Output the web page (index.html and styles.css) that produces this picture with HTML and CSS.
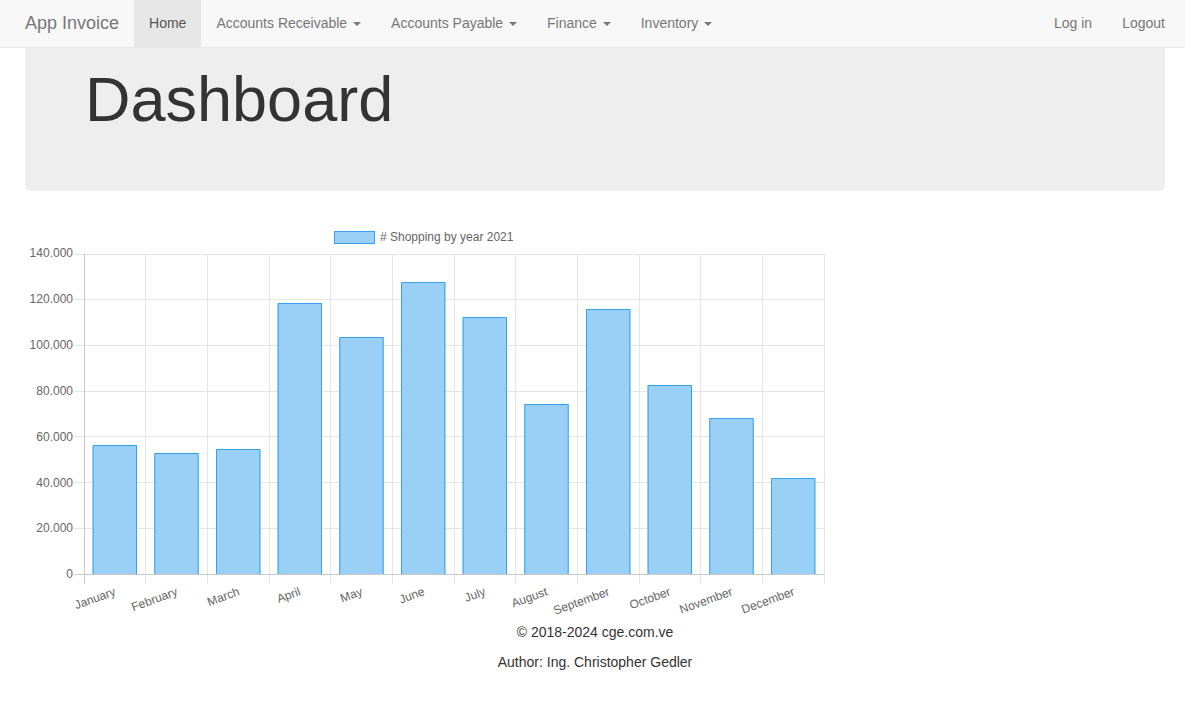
FILE: index.html
```html
<!DOCTYPE html>
<html lang="en">
<head>
<meta charset="utf-8">
<title>Dashboard - App Invoice</title>
<link rel="stylesheet" href="styles.css">
</head>
<body>
<nav class="navbar">
  <a class="brand" href="#">App Invoice</a>
  <ul class="nav">
    <li class="active"><a href="#">Home</a></li>
    <li><a href="#">Accounts Receivable <span class="caret"></span></a></li>
    <li><a href="#">Accounts Payable <span class="caret"></span></a></li>
    <li><a href="#">Finance <span class="caret"></span></a></li>
    <li><a href="#">Inventory <span class="caret"></span></a></li>
  </ul>
  <ul class="nav nav-right">
    <li><a href="#">Log in</a></li>
    <li><a href="#">Logout</a></li>
  </ul>
</nav>
<main class="container">
  <section class="jumbotron">
    <h1>Dashboard</h1>
  </section>
  <section class="chart">
    <svg class="chart-svg" width="800" height="397" viewBox="25 225 800 397" xmlns="http://www.w3.org/2000/svg">
      <!-- legend -->
      <rect x="334.5" y="231.5" width="40" height="12" fill="#9ad0f5" stroke="#36a2eb" stroke-width="1"/>
      <text class="lbl" x="380" y="237" dominant-baseline="central"># Shopping by year 2021</text>
      <!-- horizontal grid -->
      <g stroke="#e5e5e5" stroke-width="1">
        <line x1="74" y1="254.5" x2="824" y2="254.5"/>
        <line x1="74" y1="299.5" x2="824" y2="299.5"/>
        <line x1="74" y1="345.5" x2="824" y2="345.5"/>
        <line x1="74" y1="391.5" x2="824" y2="391.5"/>
        <line x1="74" y1="436.5" x2="824" y2="436.5"/>
        <line x1="74" y1="482.5" x2="824" y2="482.5"/>
        <line x1="74" y1="528.5" x2="824" y2="528.5"/>
      </g>
      <!-- vertical grid -->
      <g stroke="#e5e5e5" stroke-width="1">
        <line x1="145.5" y1="254" x2="145.5" y2="584"/>
        <line x1="207.5" y1="254" x2="207.5" y2="584"/>
        <line x1="269.5" y1="254" x2="269.5" y2="584"/>
        <line x1="330.5" y1="254" x2="330.5" y2="584"/>
        <line x1="392.5" y1="254" x2="392.5" y2="584"/>
        <line x1="454.5" y1="254" x2="454.5" y2="584"/>
        <line x1="515.5" y1="254" x2="515.5" y2="584"/>
        <line x1="577.5" y1="254" x2="577.5" y2="584"/>
        <line x1="639.5" y1="254" x2="639.5" y2="584"/>
        <line x1="700.5" y1="254" x2="700.5" y2="584"/>
        <line x1="762.5" y1="254" x2="762.5" y2="584"/>
        <line x1="824.5" y1="254" x2="824.5" y2="584"/>
      </g>
      <!-- bars -->
      <g fill="#9ad0f5">
        <rect x="92.6" y="445" width="44.4" height="129"/>
        <rect x="154.3" y="453" width="44.4" height="121"/>
        <rect x="216" y="449" width="44.4" height="125"/>
        <rect x="277.6" y="303" width="44.4" height="271"/>
        <rect x="339.3" y="337" width="44.4" height="237"/>
        <rect x="401" y="282" width="44.4" height="292"/>
        <rect x="462.6" y="317" width="44.4" height="257"/>
        <rect x="524.3" y="404" width="44.4" height="170"/>
        <rect x="586" y="309" width="44.4" height="265"/>
        <rect x="647.6" y="385" width="44.4" height="189"/>
        <rect x="709.3" y="418" width="44.4" height="156"/>
        <rect x="771" y="478" width="44.4" height="96"/>
      </g>
      <g fill="none" stroke="#36a2eb" stroke-width="1">
        <polyline points="93.1,574 93.1,445.5 136.5,445.5 136.5,574"/>
        <polyline points="154.8,574 154.8,453.5 198.2,453.5 198.2,574"/>
        <polyline points="216.5,574 216.5,449.5 259.9,449.5 259.9,574"/>
        <polyline points="278.1,574 278.1,303.5 321.5,303.5 321.5,574"/>
        <polyline points="339.8,574 339.8,337.5 383.2,337.5 383.2,574"/>
        <polyline points="401.5,574 401.5,282.5 444.9,282.5 444.9,574"/>
        <polyline points="463.1,574 463.1,317.5 506.5,317.5 506.5,574"/>
        <polyline points="524.8,574 524.8,404.5 568.2,404.5 568.2,574"/>
        <polyline points="586.5,574 586.5,309.5 629.9,309.5 629.9,574"/>
        <polyline points="648.1,574 648.1,385.5 691.5,385.5 691.5,574"/>
        <polyline points="709.8,574 709.8,418.5 753.2,418.5 753.2,574"/>
        <polyline points="771.5,574 771.5,478.5 814.9,478.5 814.9,574"/>
      </g>
      <!-- axes -->
      <g stroke="#c8c8c8" stroke-width="1">
        <line x1="84.5" y1="254" x2="84.5" y2="584"/>
        <line x1="74" y1="574.5" x2="824" y2="574.5"/>
      </g>
      <!-- y labels -->
      <g class="lbl" text-anchor="end" dominant-baseline="central">
        <text x="73" y="253">140.000</text>
        <text x="73" y="299">120.000</text>
        <text x="73" y="345">100.000</text>
        <text x="73" y="391">80.000</text>
        <text x="73" y="437">60.000</text>
        <text x="73" y="483">40.000</text>
        <text x="73" y="528">20.000</text>
        <text x="73" y="574">0</text>
      </g>
      <!-- x labels -->
      <g class="lbl" text-anchor="end" dominant-baseline="central">
        <text transform="translate(115,591) rotate(-20)">January</text>
        <text transform="translate(177,591) rotate(-20)">February</text>
        <text transform="translate(239,591) rotate(-20)">March</text>
        <text transform="translate(300,591) rotate(-20)">April</text>
        <text transform="translate(362,591) rotate(-20)">May</text>
        <text transform="translate(424,591) rotate(-20)">June</text>
        <text transform="translate(485,591) rotate(-20)">July</text>
        <text transform="translate(547,591) rotate(-20)">August</text>
        <text transform="translate(609,591) rotate(-20)">September</text>
        <text transform="translate(670,591) rotate(-20)">October</text>
        <text transform="translate(732,591) rotate(-20)">November</text>
        <text transform="translate(794,591) rotate(-20)">December</text>
      </g>
    </svg>
  </section>
  <footer class="footer">
    <p>&copy; 2018-2024 cge.com.ve</p>
    <p>Author: Ing. Christopher Gedler</p>
  </footer>
</main>
</body>
</html>
```

FILE: styles.css
```css
* { box-sizing: border-box; }
html, body { margin: 0; padding: 0; }
body {
  font-family: "Liberation Sans", Arial, Helvetica, sans-serif;
  font-size: 14px;
  line-height: 20px;
  color: #333;
  background: #fff;
}
a { text-decoration: none; }

.navbar {
  display: flex;
  align-items: stretch;
  height: 48px;
  background: #f8f8f8;
  border-bottom: 1px solid #e7e7e7;
  padding-right: 5px;
}
.brand {
  display: flex;
  align-items: center;
  padding: 0 15px 2px 25px;
  font-size: 18px;
  color: #777;
}
.nav {
  display: flex;
  list-style: none;
  margin: 0;
  padding: 0;
}
.nav li { display: flex; }
.nav a {
  display: flex;
  align-items: center;
  padding: 0 15px 2px;
  color: #777;
  white-space: pre;
}
.nav .active a {
  background: #e7e7e7;
  color: #555;
}
.nav-right { margin-left: auto; }
.caret {
  display: inline-block;
  width: 0;
  height: 0;
  margin-left: 2px;
  margin-top: 2px;
  border-top: 4px solid #777;
  border-left: 4px solid transparent;
  border-right: 4px solid transparent;
}

.container { padding: 0 20px 0 25px; }

.jumbotron {
  background: #eee;
  border-radius: 0 0 6px 6px;
  padding: 17px 60px 0 60px;
  height: 143px;
}
.jumbotron h1 {
  margin: 0;
  font-size: 63px;
  line-height: 69px;
  font-weight: 500;
  color: #333;
}

.chart { margin-top: 34px; }
.chart-svg { display: block; }
.lbl {
  font-family: "Liberation Sans", Arial, sans-serif;
  font-size: 12px;
  fill: #666;
}

.footer { text-align: center; }
.footer p { margin: 0 0 10px; }
```
